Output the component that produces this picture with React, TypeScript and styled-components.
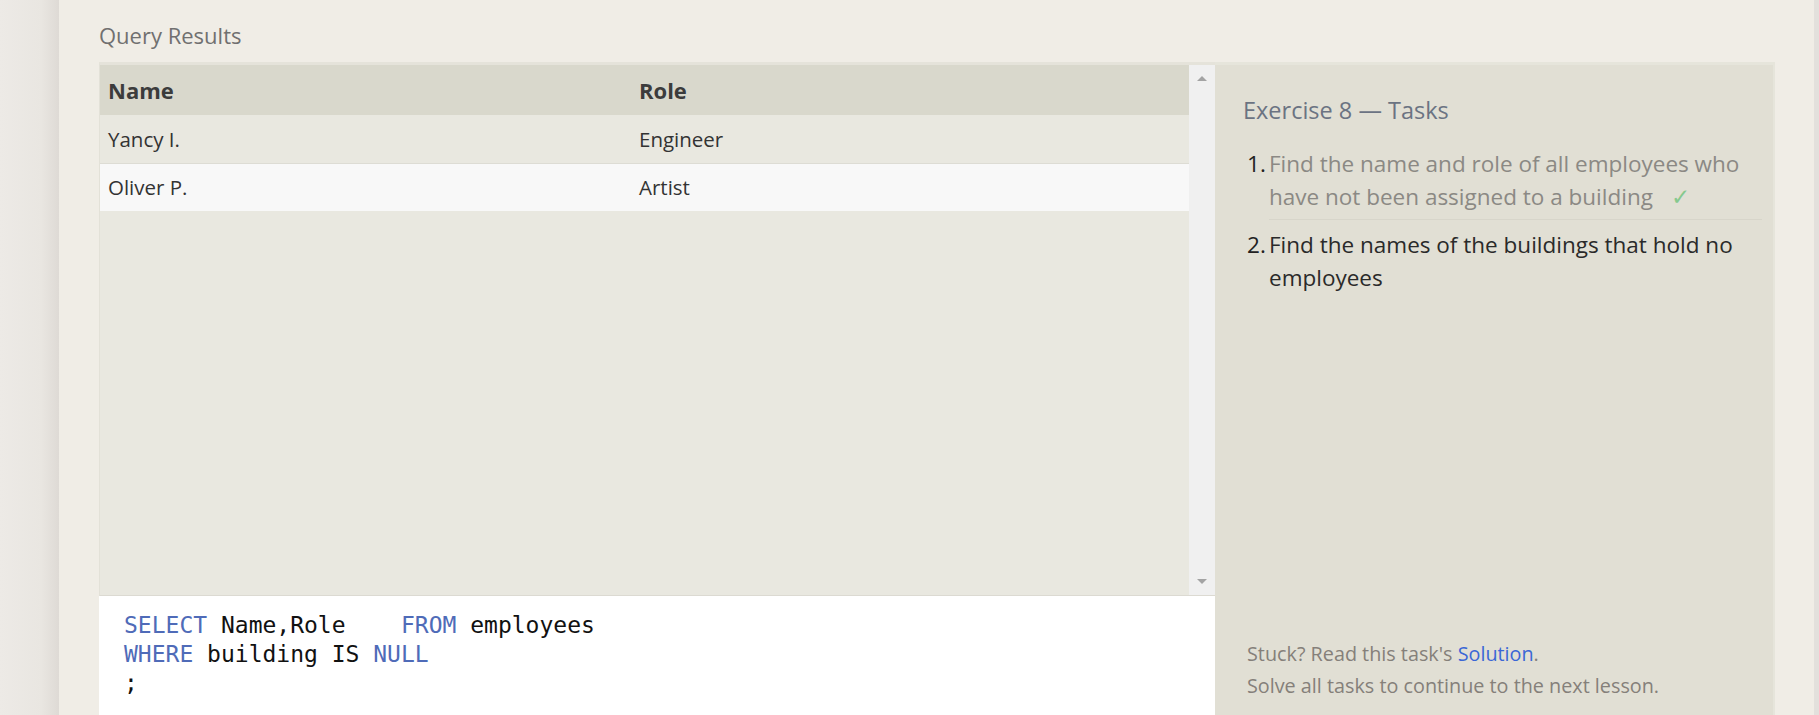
import { FC } from "react";
import styled, { createGlobalStyle } from "styled-components";

const GlobalStyle = createGlobalStyle`
  html, body {
    margin: 0;
    padding: 0;
    background: #e6e3de;
  }
  * {
    box-sizing: border-box;
  }
`;

interface ResultRow {
  name: string;
  role: string;
}

interface Task {
  text: string;
  done: boolean;
}

const rows: ResultRow[] = [
  { name: "Yancy I.", role: "Engineer" },
  { name: "Oliver P.", role: "Artist" },
];

const tasks: Task[] = [
  {
    text: "Find the name and role of all employees who have not been assigned to a building",
    done: true,
  },
  { text: "Find the names of the buildings that hold no employees", done: false },
];

const App: FC = () => {
  return (
    <Page>
      <GlobalStyle />
      <LeftGutter />
      <Panel>
        <SectionTitle>Query Results</SectionTitle>
        <Workspace>
          <ResultsColumn>
            <ResultsPane>
              <TableWrap>
                <Table>
                  <colgroup>
                    <col style={{ width: 531 }} />
                    <col />
                  </colgroup>
                  <thead>
                    <tr>
                      <HeadCell>Name</HeadCell>
                      <HeadCell>Role</HeadCell>
                    </tr>
                  </thead>
                  <tbody>
                    {rows.map((row, index) => (
                      <BodyRow key={row.name} $odd={index % 2 === 1}>
                        <Cell>{row.name}</Cell>
                        <Cell>{row.role}</Cell>
                      </BodyRow>
                    ))}
                  </tbody>
                </Table>
              </TableWrap>
              <Scrollbar>
                <Arrow $up />
                <Arrow />
              </Scrollbar>
            </ResultsPane>
            <Editor>
              <CodeLine>
                <Keyword>SELECT</Keyword> Name,Role{"    "}<Keyword>FROM</Keyword> employees
              </CodeLine>
              <CodeLine>
                <Keyword>WHERE</Keyword> building IS <Keyword>NULL</Keyword>
              </CodeLine>
              <CodeLine>;</CodeLine>
            </Editor>
          </ResultsColumn>
          <TasksPanel>
            <TasksTitle>Exercise 8 — Tasks</TasksTitle>
            <TaskList>
              {tasks.map((task, index) => (
                <TaskItem key={index} $first={index === 0}>
                  <TaskNumber>{index + 1}.</TaskNumber>
                  <TaskText $done={task.done} $divider={index < tasks.length - 1}>
                    {task.text}
                    {task.done && <Check>✓</Check>}
                  </TaskText>
                </TaskItem>
              ))}
            </TaskList>
            <Footer>
              <FooterLine>
                Stuck? Read this task's <SolutionLink href="#">Solution</SolutionLink>.
              </FooterLine>
              <FooterLine>Solve all tasks to continue to the next lesson.</FooterLine>
            </Footer>
          </TasksPanel>
        </Workspace>
      </Panel>
      <RightGutter />
    </Page>
  );
};

export default App;

const Page = styled.div`
  display: flex;
  height: 715px;
  overflow: hidden;
  font-family: "Open Sans", "Liberation Sans", sans-serif;
`;

const LeftGutter = styled.div`
  width: 59px;
  flex-shrink: 0;
  background: linear-gradient(to right, #edeae6 0%, #e9e6e1 70%, #dedad5 100%);
`;

const RightGutter = styled.div`
  width: 5px;
  flex-shrink: 0;
  background: #e3e0dc;
`;

const Panel = styled.div`
  flex: 1;
  display: flex;
  flex-direction: column;
  background: #f0ede6;
  padding: 0 39px 0 40px;
`;

const SectionTitle = styled.div`
  color: #707070;
  font-size: 22px;
  line-height: 28px;
  padding-top: 21px;
  margin-bottom: 13px;
`;

const Workspace = styled.div`
  flex: 1;
  display: grid;
  grid-template-columns: 1fr 560px;
  min-height: 0;
`;

const ResultsColumn = styled.div`
  display: flex;
  flex-direction: column;
  min-height: 0;
`;

const ResultsPane = styled.div`
  height: 534px;
  display: flex;
  background: #e9e8e0;
  border-top: 3px solid #e5e3da;
  border-left: 1px solid #e3e1d8;
  border-bottom: 1px solid #dcdad2;
`;

const TableWrap = styled.div`
  flex: 1;
`;

const Table = styled.table`
  width: 100%;
  border-collapse: collapse;
  table-layout: fixed;
`;

const HeadCell = styled.th`
  height: 50px;
  padding: 0 8px;
  text-align: left;
  background: #d9d8cc;
  color: #3c3c3c;
  font-size: 22px;
  font-weight: 700;
`;

const BodyRow = styled.tr<{ $odd: boolean }>`
  background: ${(p) => (p.$odd ? "#f8f8f8" : "#e9e8e0")};
  border-bottom: ${(p) => (p.$odd ? "none" : "1px solid #dddcd4")};
`;

const Cell = styled.td`
  height: 48px;
  padding: 0 8px;
  color: #333333;
  font-size: 20.5px;
`;

const Scrollbar = styled.div`
  width: 26px;
  flex-shrink: 0;
  background: #f0f0f0;
  display: flex;
  flex-direction: column;
  justify-content: space-between;
  align-items: center;
  padding: 11px 0 11px;
`;

const Arrow = styled.div<{ $up?: boolean }>`
  width: 0;
  height: 0;
  border-left: 5px solid transparent;
  border-right: 5px solid transparent;
  ${(p) =>
    p.$up ? "border-bottom: 5px solid #a3a3a3;" : "border-top: 5px solid #a3a3a3;"}
`;

const Editor = styled.div`
  flex: 1;
  background: #ffffff;
  padding: 15px 25px;
  font-family: "DejaVu Sans Mono", "Liberation Mono", monospace;
  font-size: 23px;
  line-height: 29px;
  color: #111111;
`;

const CodeLine = styled.div`
  white-space: pre;
`;

const Keyword = styled.span`
  color: #4f6bb8;
`;

const TasksPanel = styled.div`
  display: flex;
  flex-direction: column;
  background: #e1dfd4;
  border-top: 3px solid #e6e5db;
  border-right: 2px solid #e6e5db;
  padding: 30px 11px 13px 28px;
`;

const TasksTitle = styled.div`
  color: #6b7382;
  font-size: 23.5px;
  line-height: 30px;
  margin-bottom: 22px;
`;

const TaskList = styled.ol`
  list-style: none;
  margin: 0;
  padding: 0;
`;

const TaskItem = styled.li<{ $first: boolean }>`
  display: flex;
  align-items: flex-start;
  font-size: 22.5px;
  line-height: 33px;
  padding-top: ${(p) => (p.$first ? "0" : "8px")};
`;

const TaskNumber = styled.span`
  width: 26px;
  flex-shrink: 0;
  padding-left: 4px;
  color: #222222;
`;

const TaskText = styled.div<{ $done: boolean; $divider: boolean }>`
  flex: 1;
  color: ${(p) => (p.$done ? "#8b8984" : "#2a2a2a")};
  padding-bottom: ${(p) => (p.$divider ? "6px" : "0")};
  border-bottom: ${(p) => (p.$divider ? "1px solid #d7d5ca" : "none")};
`;

const Check = styled.span`
  display: inline-block;
  color: #86c98e;
  margin-left: 18px;
`;

const Footer = styled.div`
  margin-top: auto;
  padding-left: 4px;
  color: #85807a;
  font-size: 19.8px;
  line-height: 32px;
`;

const FooterLine = styled.div``;

const SolutionLink = styled.a`
  color: #3b67d6;
  text-decoration: none;
`;
